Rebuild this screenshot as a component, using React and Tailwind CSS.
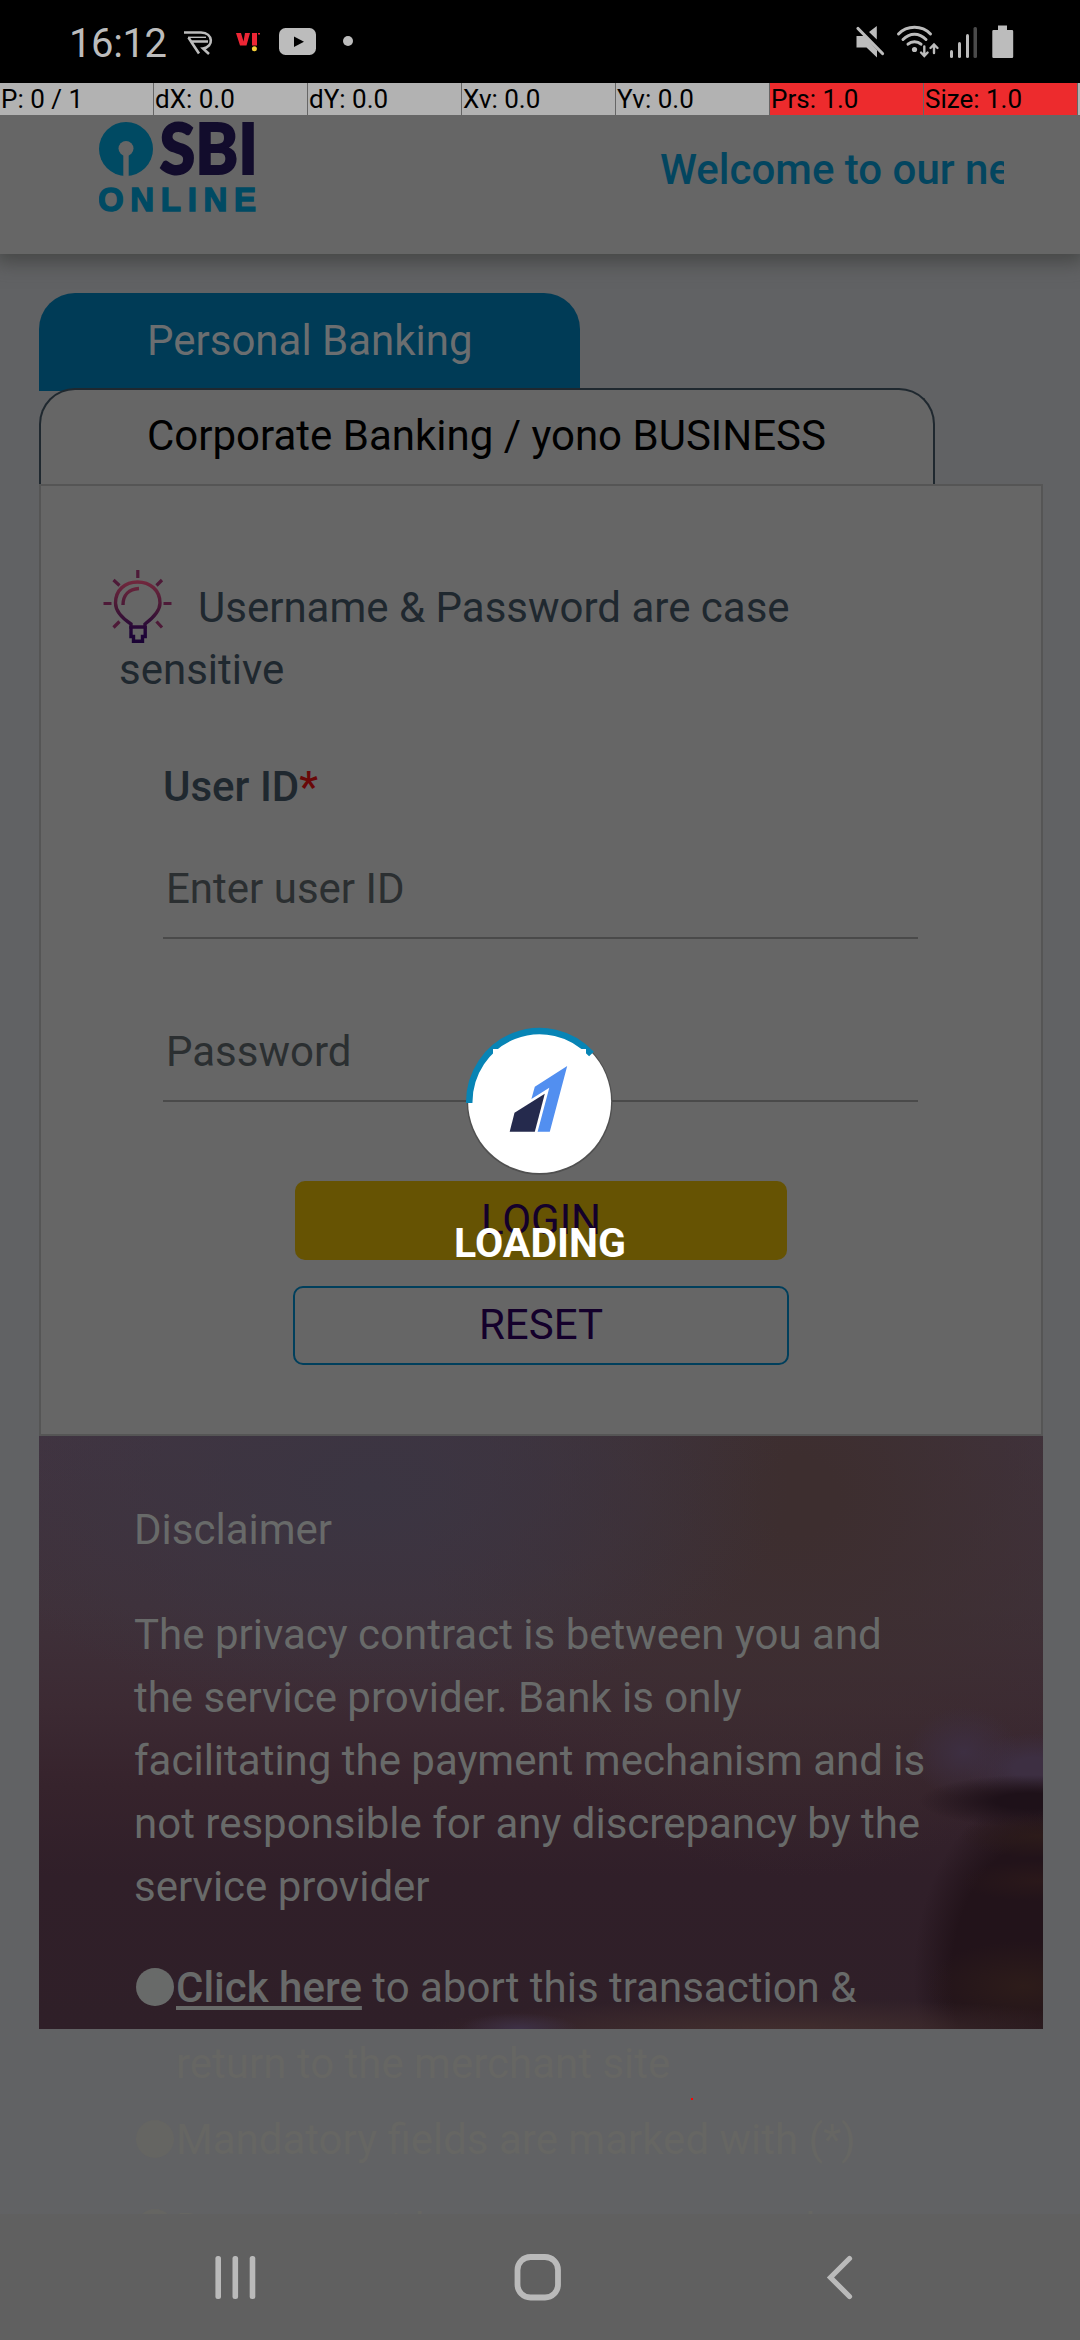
import React from "react";

function StatusBar() {
  return (
    <div className="flex h-[83px] w-full shrink-0 items-start bg-black pl-[69px] text-[#bcbcbc]">
      <span className="mt-[20px] w-[115px] text-[40px] leading-[48px] tracking-[-0.4px]">16:12</span>
      <svg className="mt-[28px] h-[30px] w-[30px]" viewBox="184 28 30 30" fill="none" stroke="#bcbcbc" strokeWidth="2.6">
        <path d="M184 32.500H201C213.500 33 214 47 203 48.500L209 54" />
        <path d="M208 41.500H191L188.500 37.500M191 41.500L199 53.500" />
        <path d="M188 37.300H206" strokeWidth="1.400" />
      </svg>
      <svg className="ml-[22px] mt-[28px] h-[30px] w-[26px]" viewBox="236 28 26 30">
        <path d="M236 33h5l2.500 8.500L245 33h5l-3.500 12.500h-6.500z" fill="#ed2635" />
        <path d="M252 33h5v12.500h-5z" fill="#ed2635" />
        <path d="M258 33h2v1.500h-2z" fill="#ed2635" />
        <circle cx="254.400" cy="48.800" r="2.500" fill="#f5cf38" />
      </svg>
      <svg className="ml-[17px] mt-[28px] h-[28px] w-[38px]" viewBox="279 28 38 28">
        <rect x="279" y="28" width="37" height="27" rx="6.500" fill="#bcbcbc" />
        <path d="M294 36.500v10.500l10-5.200z" fill="#000" />
      </svg>
      <span className="ml-[26px] mt-[36px] h-[10px] w-[10px] rounded-full bg-[#bcbcbc]" />
      <svg className="ml-[501px] mt-[24px] h-[36px] w-[32px]" viewBox="854 24 32 36" fill="#bcbcbc">
        <path d="M856.500 36h8l12.500 14v7.500l-10.500-10h-10zM876.800 26v13.500l-7.800-7.500z" />
        <path d="M858 28.500L882.500 53.500" stroke="#bcbcbc" strokeWidth="3.200" strokeLinecap="round" />
      </svg>
      <svg className="ml-[9px] mt-[24px] h-[36px] w-[46px]" viewBox="895 24 46 36" fill="none" stroke="#bcbcbc" strokeWidth="3" strokeLinecap="round">
        <path d="M898.500 34C907 25 922 25 930.500 34M903 39.500C910 32.500 919 32.500 926 39.500M908 44.200C911.500 41 917.500 41 921 44.200" />
        <circle cx="914.500" cy="49.500" r="2.600" fill="#bcbcbc" stroke="none" />
        <path d="M924.300 46.500v9M921 52.500l3.300 3.500 3.300-3.500M934 53V45M930.500 48l3.500-3.500 3.500 3.500" strokeWidth="2.400" />
      </svg>
      <svg className="ml-[8px] mt-[24px] h-[36px] w-[30px]" viewBox="949 24 30 36" fill="#bcbcbc">
        <rect x="950" y="50" width="3" height="8" rx="1.500" />
        <rect x="958" y="42" width="3" height="16" rx="1.500" />
        <rect x="966" y="34" width="3" height="24" rx="1.500" />
        <rect x="973.500" y="27" width="3.500" height="31" rx="1.500" fill="#4a4a4a" />
      </svg>
      <svg className="ml-[12px] mt-[24px] h-[36px] w-[24px]" viewBox="990 24 24 36" fill="#bcbcbc">
        <path d="M997 25.500h9v4.500h5q1.200 0 1.200 1.200v25.500q0 1.200-1.200 1.200h-18.500q-1.200 0-1.200-1.200v-25.500q0-1.200 1.200-1.200h4.500z" />
      </svg>
    </div>
  );
}

const readings = [
  ["P: 0 / 1", false],
  ["dX: 0.0", false],
  ["dY: 0.0", false],
  ["Xv: 0.0", false],
  ["Yv: 0.0", false],
  ["Prs: 1.0", true],
  ["Size: 1.0", true],
];

function PointerBar() {
  return (
    <div className="relative z-10 flex h-[32px] w-full shrink-0 gap-px bg-[#666666] text-[26px] leading-[32px] text-black">
      {readings.map(([label, hot]) => (
        <span
          key={label}
          className={
            hot ? "w-[153px] shrink-0 bg-[#ed2b2d] pl-[1px]" : "w-[153px] shrink-0 bg-[#b2b2b2] pl-[1px]"
          }
        >
          {label}
        </span>
      ))}
      <span className="flex-1 bg-[#b2b2b2]" />
    </div>
  );
}

function SiteHeader() {
  return (
    <header className="flex h-[139px] w-full shrink-0 items-start bg-[#666666] pl-[99px] shadow-[0_4px_18px_4px_rgba(66,68,66,0.9)]">
      <svg className="mt-[5px] h-[96px] w-[160px]" viewBox="99 120 160 96">
        <circle cx="126" cy="149" r="27" fill="#004a63" />
        <circle cx="126" cy="148.500" r="7.500" fill="#666666" />
        <rect x="123.300" y="150" width="5.400" height="27" fill="#666666" />
        <text x="159.500" y="174.200" fontFamily="Lato, sans-serif" fontWeight="900" fontSize="71" fill="#120c2c" stroke="#120c2c" strokeWidth="1.800" textLength="98.500" lengthAdjust="spacingAndGlyphs">SBI</text>
        <text x="98" y="211.400" fontFamily="'Liberation Sans', sans-serif" fontWeight="700" fontSize="33" fill="#004a63" stroke="#004a63" strokeWidth="1.400" textLength="158" lengthAdjust="spacing">ONLINE</text>
      </svg>
      <div className="ml-[401px] mt-[23px] w-[344px] overflow-hidden whitespace-nowrap text-[42px] font-medium leading-[63px] text-[#03455f]">
        Welcome to our new
      </div>
    </header>
  );
}

function BulbIcon() {
  return (
    <svg className="float-left -ml-[16px] -mt-[7px] mr-[26px] h-[60px] w-[69px] overflow-visible" viewBox="103 570 69 60" fill="none" strokeLinecap="butt">
      <defs>
        <linearGradient id="bulb" gradientUnits="userSpaceOnUse" x1="0" y1="580" x2="0" y2="643">
          <stop offset="0" stopColor="#73283d" />
          <stop offset="0.450" stopColor="#451735" />
          <stop offset="0.850" stopColor="#1f0438" />
          <stop offset="1" stopColor="#1a0334" />
        </linearGradient>
      </defs>
      <g stroke="url(#bulb)" strokeWidth="3.400">
        <path d="M131 624C122 618 115.500 611 115.500 603C115.500 590 125 582 137.500 582C150 582 160 590 160 603C160 611 153 618 145 624V627H131z" />
        <path d="M123 605C123 595 129 589 139 588.500" />
        <path d="M131 626V636.500H133.500V641.200H142.500V636.500H145.200V626" />
      </g>
      <g stroke="#4e1a38" strokeWidth="3.200">
        <path d="M137.800 570V578M113.500 580L119.500 585.500M162 580L156.500 585.500M103.500 603.500H111.500M163.500 603.500H171.500M113.500 627.500L119.500 621.500M162 627.500L156.500 621.500" />
      </g>
    </svg>
  );
}

function LoginPanel() {
  return (
    <section className="h-[952px] border-2 border-[#555555] bg-[#666666] pl-[78px] pt-[91px] text-[#1f282f]">
      <p className="leading-[62px]">
        <BulbIcon />
        Username &amp; Password are case
        <br />
        sensitive
      </p>
      <form className="ml-[44px] flex w-[755px] flex-col">
        <label className="mt-[54px] font-medium leading-[63px]">
          User ID<span className="text-[#690808]">*</span>
        </label>
        <input
          className="mt-[39px] h-[82px] border-b-2 border-[#4a4a4a] bg-transparent pb-[17px] pl-[3px] leading-[63px] placeholder:text-[#2b2f31]"
          placeholder="Enter user ID"
        />
        <input
          className="mt-[81px] h-[82px] border-b-2 border-[#4a4a4a] bg-transparent pb-[17px] pl-[3px] leading-[63px] placeholder:text-[#2b2f31]"
          placeholder="Password"
        />
        <button type="button" className="ml-[132px] mt-[79px] h-[79px] w-[492px] rounded-[10px] bg-[#665303] pb-[2px] leading-[63px] text-[#14002b]">
          LOGIN
        </button>
        <button type="button" className="ml-[130px] mt-[26px] h-[79px] w-[496px] rounded-[10px] border-2 border-[#003f5c] pb-[2px] leading-[63px] text-[#14002b]">
          RESET
        </button>
      </form>
    </section>
  );
}

function Disclaimer() {
  return (
    <section className="h-[593px] bg-[#2f1f28] bg-[radial-gradient(ellipse_60px_16px_at_480px_593px,#3e3147,transparent),radial-gradient(ellipse_360px_36px_at_740px_598px,#44302f,transparent),radial-gradient(ellipse_80px_22px_at_1000px_400px,#2c1b1a,transparent),radial-gradient(ellipse_80px_20px_at_1000px_445px,#2a181a,transparent),radial-gradient(ellipse_100px_45px_at_985px_550px,#2d1c1a,transparent),radial-gradient(ellipse_110px_26px_at_990px_365px,#1e1119_30%,transparent),radial-gradient(ellipse_135px_190px_at_1010px_540px,#22131a_72%,transparent),radial-gradient(ellipse_55px_45px_at_925px_316px,#3d2f42,transparent),radial-gradient(ellipse_70px_35px_at_995px_332px,#3d2f42_30%,transparent),radial-gradient(ellipse_420px_230px_at_330px_50px,#3b3542,transparent),radial-gradient(ellipse_380px_380px_at_760px_60px,#3d2e2f_10%,transparent),linear-gradient(to_bottom,#413441_0px,#3f313a_170px,#3c2a33_270px,#36232c_350px,#301f29_440px,#2f1f28_593px)] pl-[95px] pt-[62px] text-[#686a69]">
      <h2 className="leading-[63px]">Disclaimer</h2>
      <p className="mt-[42px] w-[820px] whitespace-nowrap leading-[63px]">
        The privacy contract is between you and
        <br />
        the service provider. Bank is only
        <br />
        facilitating the payment mechanism and is
        <br />
        not responsible for any discrepancy by the
        <br />
        service provider
      </p>
      <ul className="mt-[32px] whitespace-nowrap leading-[76px]">
        <li className="flex">
          <span className="ml-[2px] mr-[2px] mt-[18px] h-[38px] w-[38px] shrink-0 rounded-full bg-[#686a69]" />
          <div>
            <b className="font-medium underline decoration-[4px] underline-offset-[4px] [text-decoration-skip-ink:none]">Click here</b> to abort this transaction &amp;
            <br />
            <span className="text-[#666663]">return to the merchant site</span>
          </div>
        </li>
        <li className="flex text-[#666663]">
          <span className="ml-[2px] mr-[2px] mt-[18px] h-[38px] w-[38px] shrink-0 rounded-full bg-[#656562]" />
          Mandatory fields are marked with (*)
        </li>
        <li className="mt-[13px] flex text-[#666663]">
          <span className="ml-[2px] mr-[2px] mt-[18px] h-[38px] w-[38px] shrink-0 rounded-full bg-[#656562]" />
          Do not provide your username and
        </li>
      </ul>
    </section>
  );
}

function Loader() {
  return (
    <div className="absolute left-[440px] top-[1020px] flex w-[200px] flex-col items-center">
      <svg className="h-[160px] w-[200px]" viewBox="440 1020 200 160">
        <circle cx="539.600" cy="1102" r="72.800" fill="#505050" />
        <circle cx="539.600" cy="1101.500" r="71.500" fill="#ffffff" />
        <path d="M469.200 1103A70.500 71.500 0 0 1 591.500 1054" fill="none" stroke="#0784b5" strokeWidth="6.500" />
        <rect x="493" y="1049" width="93" height="96" fill="#ffffff" />
        <path d="M567.200 1066L534.800 1086.700L531.400 1099L549.300 1087.700L537.600 1131.700H549.800z" fill="#528ff0" />
        <path d="M544.800 1093.700L514.500 1112.700L509.700 1131.700H534.800z" fill="#252a4d" />
      </svg>
      <span className="mt-[39px] text-[41px] font-bold leading-[48px] text-white">LOADING</span>
    </div>
  );
}

function NavBar() {
  return (
    <nav className="relative flex h-[126px] w-full shrink-0 items-start bg-[#606060] pl-[215px] pt-[38px]">
      <svg className="h-[54px] w-[42px]" viewBox="215 2252 42 54" fill="#bababa">
        <rect x="215.400" y="2256" width="5.600" height="43" rx="2.500" />
        <rect x="232.500" y="2256" width="5.600" height="43" rx="2.500" />
        <rect x="249.700" y="2256" width="5.600" height="43" rx="2.500" />
      </svg>
      <svg className="ml-[253px] h-[54px] w-[56px]" viewBox="510 2252 56 54" fill="none" stroke="#bababa" strokeWidth="5.800">
        <rect x="517.500" y="2257" width="40.500" height="40.500" rx="13" />
      </svg>
      <svg className="ml-[258px] h-[54px] w-[34px]" viewBox="824 2252 34 54" fill="none" stroke="#bababa" strokeWidth="5.200" strokeLinecap="round">
        <path d="M849.500 2258.500L830.500 2277.500L849.500 2296.500" />
      </svg>
    </nav>
  );
}

export default function App() {
  return (
    <div className="relative flex h-[2340px] w-[1080px] flex-col overflow-hidden bg-[#616264] font-[Roboto,sans-serif]">
      <StatusBar />
      <PointerBar />
      <SiteHeader />
      <main className="h-[1960px] w-full shrink-0 overflow-hidden pl-[39px] pr-[37px] pt-[39px] text-[42px]">
        <div className="h-[98px] w-[541px] rounded-t-[36px] bg-[#003b56] pl-[108px] pt-[16px] leading-[63px] text-[#6b6e70]">
          Personal Banking
        </div>
        <div className="-mt-[3px] h-[96px] w-[896px] rounded-t-[36px] border-2 border-b-0 border-[#1f282f] bg-[#666666] pl-[106px] pt-[14px] leading-[63px] text-black">
          Corporate Banking / yono BUSINESS
        </div>
        <LoginPanel />
        <Disclaimer />
      </main>
      <NavBar />
      <Loader />
      <span className="absolute left-[691px] top-[2098px] h-[2px] w-[2px] bg-[#ff0000]" />
    </div>
  );
}
